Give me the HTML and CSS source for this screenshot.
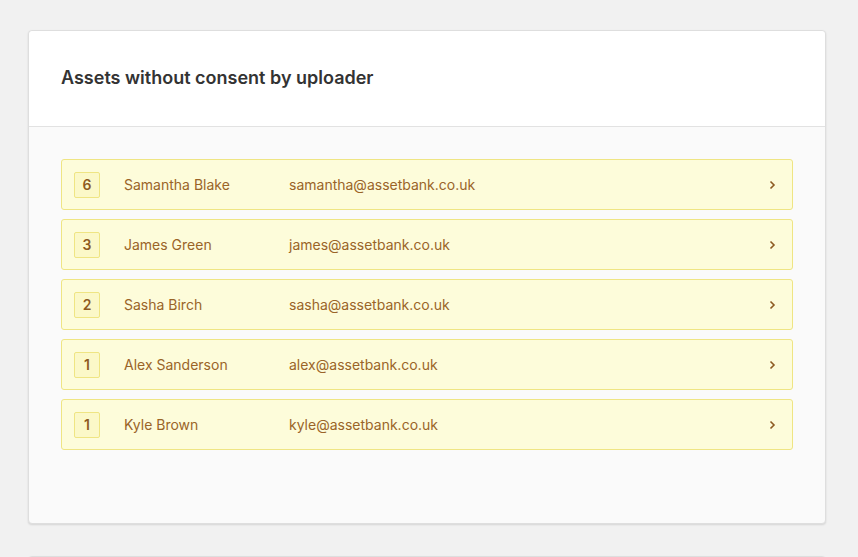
FILE: index.html
```html
<!DOCTYPE html>
<html lang="en">
<head>
    <meta charset="UTF-8">
    <meta name="viewport" content="width=device-width, initial-scale=1.0">
    <title>Assets without consent</title>
    <link rel="stylesheet" href="styles.css">
</head>
<body>
    <div class="panel">
        <div class="panel-header">
            <h2>Assets without consent by uploader</h2>
        </div>
        <div class="panel-body">
            <a class="uploader-row" href="#">
                <span class="count">6</span>
                <span class="name">Samantha Blake</span>
                <span class="email">samantha@assetbank.co.uk</span>
                <svg class="chevron" width="8" height="10" viewBox="0 0 8 10"><path d="M2.5 1.5 L6 5 L2.5 8.5" fill="none" stroke="currentColor" stroke-width="1.6"/></svg>
            </a>
            <a class="uploader-row" href="#">
                <span class="count">3</span>
                <span class="name">James Green</span>
                <span class="email">james@assetbank.co.uk</span>
                <svg class="chevron" width="8" height="10" viewBox="0 0 8 10"><path d="M2.5 1.5 L6 5 L2.5 8.5" fill="none" stroke="currentColor" stroke-width="1.6"/></svg>
            </a>
            <a class="uploader-row" href="#">
                <span class="count">2</span>
                <span class="name">Sasha Birch</span>
                <span class="email">sasha@assetbank.co.uk</span>
                <svg class="chevron" width="8" height="10" viewBox="0 0 8 10"><path d="M2.5 1.5 L6 5 L2.5 8.5" fill="none" stroke="currentColor" stroke-width="1.6"/></svg>
            </a>
            <a class="uploader-row" href="#">
                <span class="count">1</span>
                <span class="name">Alex Sanderson</span>
                <span class="email">alex@assetbank.co.uk</span>
                <svg class="chevron" width="8" height="10" viewBox="0 0 8 10"><path d="M2.5 1.5 L6 5 L2.5 8.5" fill="none" stroke="currentColor" stroke-width="1.6"/></svg>
            </a>
            <a class="uploader-row" href="#">
                <span class="count">1</span>
                <span class="name">Kyle Brown</span>
                <span class="email">kyle@assetbank.co.uk</span>
                <svg class="chevron" width="8" height="10" viewBox="0 0 8 10"><path d="M2.5 1.5 L6 5 L2.5 8.5" fill="none" stroke="currentColor" stroke-width="1.6"/></svg>
            </a>
        </div>
    </div>
    <div class="panel panel-next"></div>
</body>
</html>
```

FILE: styles.css
```css
body {
    font-family: Inter, "Noto Sans", sans-serif;
    background-color: #f1f1f1;
    margin: 0;
    padding: 30px 32px 0 28px;
    overflow: hidden;
}
.panel {
    background: #fafafa;
    border: 1px solid #dedede;
    border-radius: 4px;
    box-shadow: 0 1px 2px rgba(0, 0, 0, 0.12);
}
.panel-next {
    margin-top: 32px;
    height: 40px;
}
.panel-header {
    background: white;
    height: 95px;
    padding: 0 32px;
    display: flex;
    align-items: center;
    border-bottom: 1px solid #e2e2e2;
    border-radius: 4px 4px 0 0;
}
h2 {
    color: #333;
    font-size: 18px;
    font-weight: 600;
    margin: 0 0 2px;
}
.panel-body {
    padding: 32px 32px 73px;
    display: flex;
    flex-direction: column;
    gap: 9px;
}
.uploader-row {
    display: flex;
    align-items: center;
    height: 49px;
    padding: 0 16px 0 12px;
    background: #fdfcda;
    border: 1px solid #efe583;
    border-radius: 3px;
    color: #9a6428;
    font-size: 14px;
    text-decoration: none;
}
.count {
    width: 24px;
    height: 24px;
    border: 1px solid #efe583;
    background: #fbf8c8;
    border-radius: 2px;
    display: flex;
    align-items: center;
    justify-content: center;
    font-weight: 600;
    color: #8d5a22;
}
.name {
    margin-left: 24px;
    width: 165px;
}
.email {
    flex: 1;
}
.chevron {
    color: #8d5a22;
}
```
